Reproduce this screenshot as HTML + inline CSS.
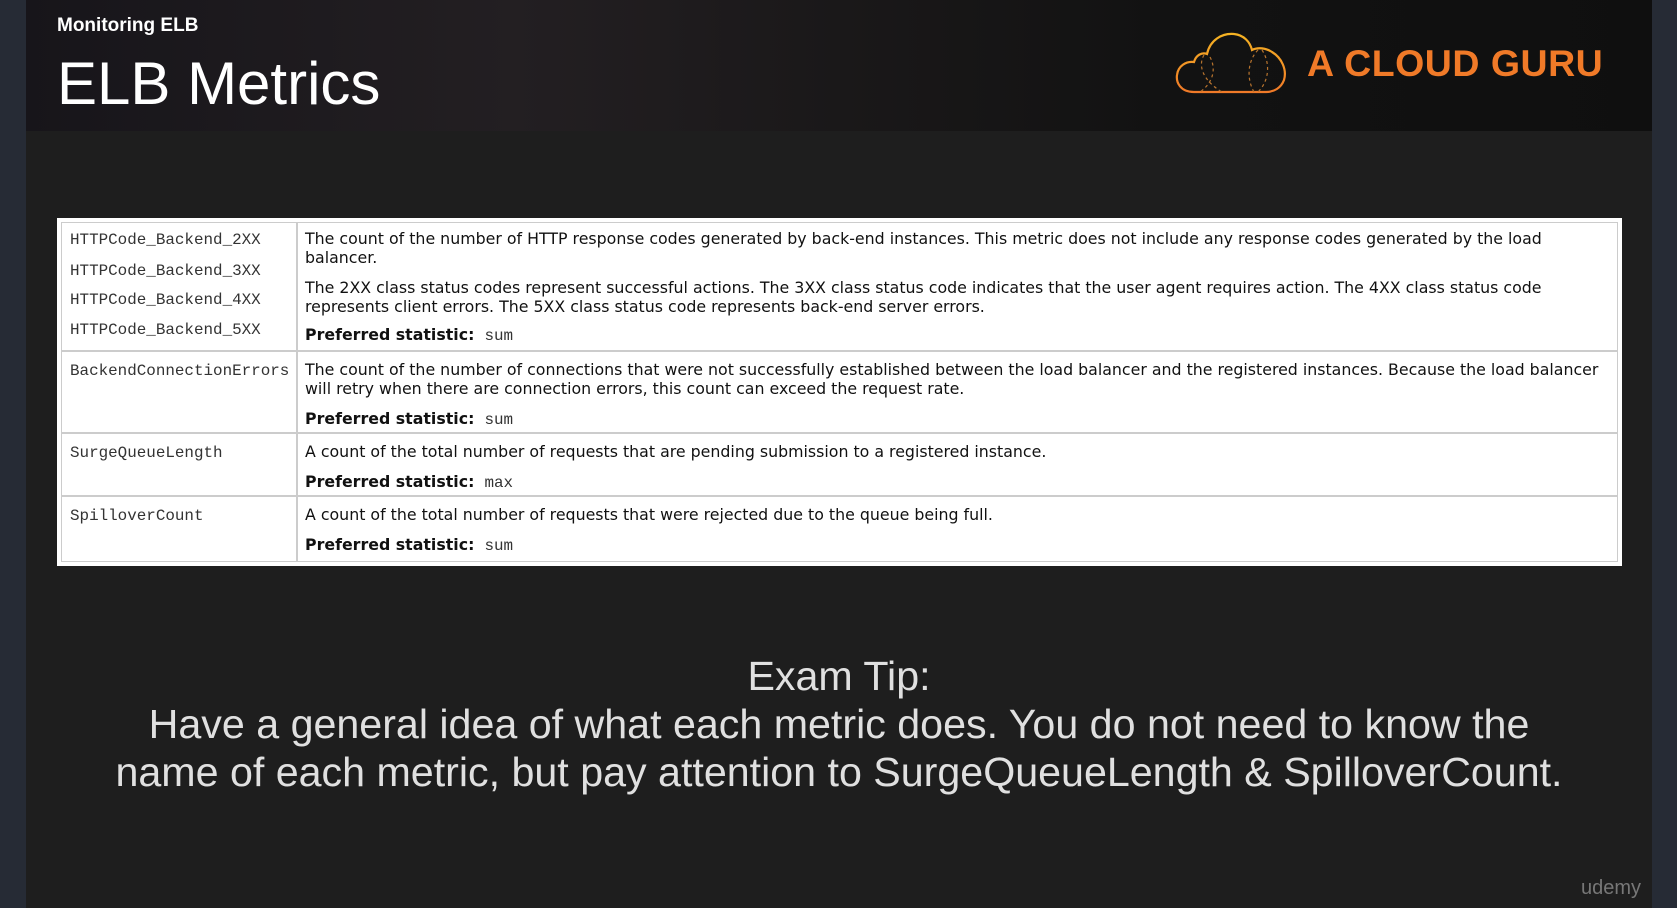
<!DOCTYPE html>
<html><head><meta charset="utf-8"><style>
*{margin:0;padding:0;box-sizing:border-box}
body{width:1677px;height:908px;background:#1e1e1e;position:relative;overflow:hidden;font-family:"Liberation Sans",sans-serif}
.sl{position:absolute;left:0;top:0;width:26px;height:908px;background:#262b35}
.sr{position:absolute;left:1652px;top:0;width:25px;height:908px;background:#262b35}
.hdr{position:absolute;left:26px;top:0;width:1626px;height:131px;background:linear-gradient(90deg,#17151a 0%,#231f22 30%,#1a1819 50%,#121212 70%,#0f0f0f 100%)}
.t{position:absolute;white-space:nowrap}
.tbl{position:absolute;left:57px;top:218px;width:1565px;height:348px;background:#fff;border:4px solid #fff;outline:1px solid #ccc;outline-offset:-5px}
.ln{position:absolute;background:#ccc}
.d{font-family:"DejaVu Sans",sans-serif;font-size:15.8px;color:#111}
.m{font-family:"Liberation Mono",monospace;font-size:15.9px;color:#333}
.b{font-weight:bold}
.tip{position:absolute;left:26px;width:1626px;text-align:center;color:#e0e0e0;font-size:41.2px;white-space:nowrap}
</style></head><body>
<div class="sl"></div><div class="sr"></div>
<div class="hdr"></div>
<div class="t" style="left:57px;top:15px;color:#fff;font-size:19px;font-weight:bold">Monitoring ELB</div>
<div class="t" style="left:57px;top:49px;color:#fff;font-size:60px">ELB Metrics</div>
<svg style="position:absolute;left:1174px;top:30px" width="118" height="66" viewBox="0 0 118 66">
<defs><linearGradient id="g" x1="0" y1="0" x2="0" y2="1"><stop offset="0" stop-color="#f5b323"/><stop offset="1" stop-color="#f07a28"/></linearGradient></defs>
<path d="M20 62 C6 62 2 52 3 45 C4 36 12 31 20 32 C22 25 28 22 33 24 C36 10 48 3 60 4 C70 5 76 12 78 20 C84 17 92 18 98 22 C108 28 113 40 110 50 C107 58 100 62 92 62 Z" fill="none" stroke="url(#g)" stroke-width="2.2"/>
<path d="M30 25 C24 35 28 50 48 62 M36 27 C42 38 40 52 26 62 M84 20 C74 30 72 48 80 62 M88 20 C96 32 96 50 84 62" fill="none" stroke="#b8742e" stroke-width="1.2" stroke-dasharray="3 3"/>
</svg>
<div class="t" style="left:1307px;top:42px;color:#f07a28;font-size:37.5px;font-weight:bold;letter-spacing:0.5px">A CLOUD GURU</div>

<div class="tbl"></div>
<div class="ln" style="left:296px;top:222px;width:2px;height:340px"></div>
<div class="ln" style="left:61px;top:350px;width:1557px;height:2px"></div>
<div class="ln" style="left:61px;top:432px;width:1557px;height:2px"></div>
<div class="ln" style="left:61px;top:495px;width:1557px;height:2px"></div>

<div class="t m" style="left:70px;top:231px">HTTPCode_Backend_2XX</div>
<div class="t m" style="left:70px;top:262px">HTTPCode_Backend_3XX</div>
<div class="t m" style="left:70px;top:291px">HTTPCode_Backend_4XX</div>
<div class="t m" style="left:70px;top:321px">HTTPCode_Backend_5XX</div>
<div class="t m" style="left:70px;top:362px">BackendConnectionErrors</div>
<div class="t m" style="left:70px;top:444px">SurgeQueueLength</div>
<div class="t m" style="left:70px;top:507px">SpilloverCount</div>

<div class="t d" style="left:305px;top:229px">The count of the number of HTTP response codes generated by back-end instances. This metric does not include any response codes generated by the load</div>
<div class="t d" style="left:305px;top:248px">balancer.</div>
<div class="t d" style="left:305px;top:278px">The 2XX class status codes represent successful actions. The 3XX class status code indicates that the user agent requires action. The 4XX class status code</div>
<div class="t d" style="left:305px;top:297px">represents client errors. The 5XX class status code represents back-end server errors.</div>
<div class="t d" style="left:305px;top:325px"><span class="b">Preferred statistic:</span>&nbsp; <span class="m">sum</span></div>
<div class="t d" style="left:305px;top:360px">The count of the number of connections that were not successfully established between the load balancer and the registered instances. Because the load balancer</div>
<div class="t d" style="left:305px;top:379px">will retry when there are connection errors, this count can exceed the request rate.</div>
<div class="t d" style="left:305px;top:409px"><span class="b">Preferred statistic:</span>&nbsp; <span class="m">sum</span></div>
<div class="t d" style="left:305px;top:442px">A count of the total number of requests that are pending submission to a registered instance.</div>
<div class="t d" style="left:305px;top:472px"><span class="b">Preferred statistic:</span>&nbsp; <span class="m">max</span></div>
<div class="t d" style="left:305px;top:505px">A count of the total number of requests that were rejected due to the queue being full.</div>
<div class="t d" style="left:305px;top:535px"><span class="b">Preferred statistic:</span>&nbsp; <span class="m">sum</span></div>

<div class="tip" style="top:653px">Exam Tip:</div>
<div class="tip" style="top:701px">Have a general idea of what each metric does. You do not need to know the</div>
<div class="tip" style="top:749px">name of each metric, but pay attention to SurgeQueueLength &amp; SpilloverCount.</div>
<div class="t" style="left:1581px;top:877px;color:#777;font-size:20px">udemy</div>
</body></html>
